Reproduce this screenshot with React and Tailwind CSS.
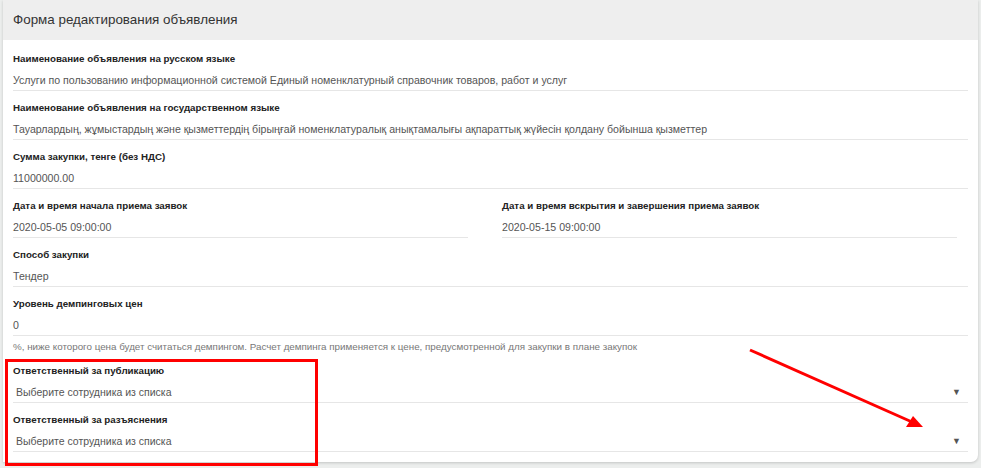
import React from 'react'

const font = { fontFamily: '"Liberation Sans", Arial, sans-serif' }

function Field({ label, value, className = '' }) {
  return (
    <div className={`pt-[10px] ${className}`}>
      <div className="text-[9.75px] leading-[14px] font-bold text-[#222]">{label}</div>
      <div className="mt-[6px] text-[10.6px] leading-[16px] text-[#555] pb-[2px] border-b border-[#e6e6e6] whitespace-nowrap">{value}</div>
    </div>
  )
}

function SelectField({ label }) {
  return (
    <div className="pt-[10px]">
      <div className="text-[9.75px] leading-[14px] font-bold text-[#222]">{label}</div>
      <div className="mt-[6px] flex items-center justify-between text-[10.5px] leading-[16px] text-[#555] pb-[2px] border-b border-[#e6e6e6]">
        <span className="pl-[3px]">Выберите сотрудника из списка</span>
        <span className="text-[9px] text-[#555] pr-[7px]">▼</span>
      </div>
    </div>
  )
}

export default function App() {
  return (
    <div className="relative w-[981px] h-[468px] bg-[#eceeed] overflow-hidden" style={font}>
      <div className="ml-[3px] w-[975px] h-[462px] bg-white rounded-br-[7px] shadow-[0_1px_3px_rgba(0,0,0,0.18)] overflow-hidden">
        <div className="h-[40px] bg-[#eeeeee] px-[10px] flex items-center">
          <h1 className="text-[13.4px] text-[#333]">Форма редактирования объявления</h1>
        </div>
        <div className="pl-[10px] w-[965px] pt-[2px]">
          <Field label="Наименование объявления на русском языке" value="Услуги по пользованию информационной системой Единый номенклатурный справочник товаров, работ и услуг" />
          <Field label="Наименование объявления на государственном языке" value="Тауарлардың, жұмыстардың және қызметтердің бірыңғай номенклатуралық анықтамалығы ақпараттық жүйесін қолдану бойынша қызметтер" />
          <Field label="Сумма закупки, тенге (без НДС)" value="11000000.00" />
          <div className="grid grid-cols-[455px_455px] gap-x-[34px]">
            <Field label="Дата и время начала приема заявок" value="2020-05-05 09:00:00" />
            <Field label="Дата и время вскрытия и завершения приема заявок" value="2020-05-15 09:00:00" />
          </div>
          <Field label="Способ закупки" value="Тендер" />
          <Field label="Уровень демпинговых цен" value="0" />
          <div className="mt-[4px] text-[9.8px] leading-[13px] text-[#777] whitespace-nowrap">
            %, ниже которого цена будет считаться демпингом. Расчет демпинга применяется к цене, предусмотренной для закупки в плане закупок
          </div>
          <div className="mt-[1px]">
            <SelectField label="Ответственный за публикацию" />
            <SelectField label="Ответственный за разъяснения" />
          </div>
        </div>
      </div>
      <div className="absolute left-[5px] top-[359px] w-[313px] h-[107px] border-[3px] border-[#ff0000]" />
      <svg className="absolute left-0 top-0" width="981" height="468">
        <line x1="750" y1="350" x2="912" y2="422" stroke="#ff0000" strokeWidth="3" />
        <polygon points="923,427 906,427 913,416" fill="#ff0000" />
      </svg>
    </div>
  )
}
